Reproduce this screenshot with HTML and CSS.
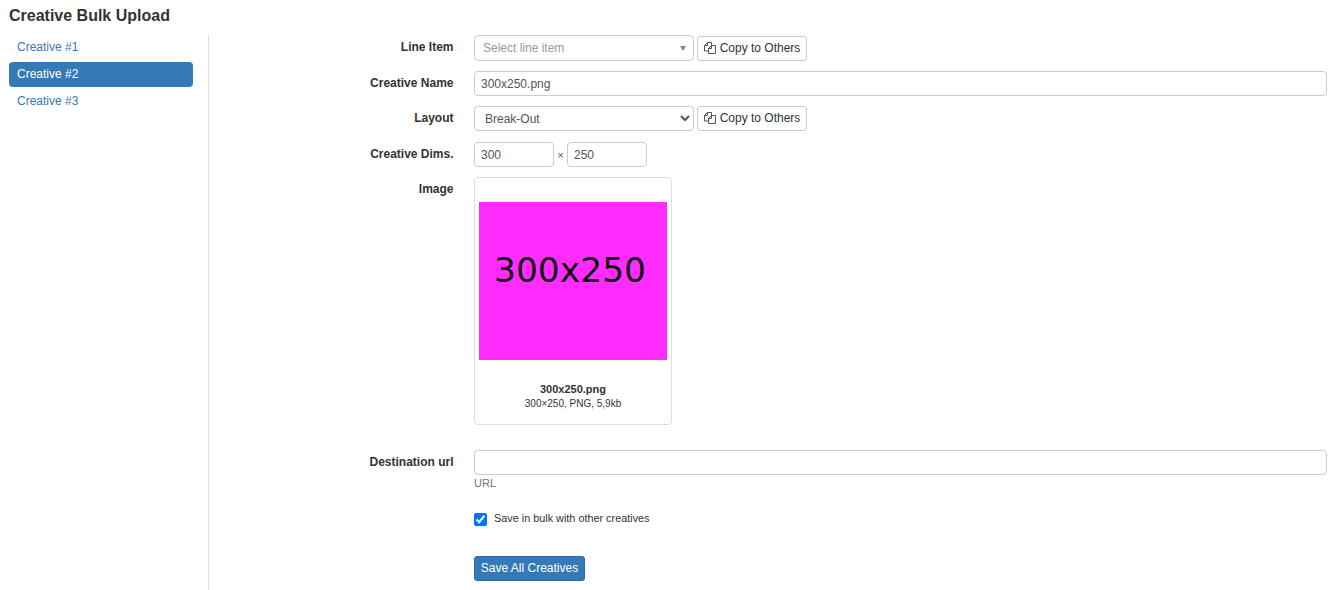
FILE: index.html
```html
<!DOCTYPE html>
<html lang="en">
<head>
    <meta charset="UTF-8">
    <meta name="viewport" content="width=device-width, initial-scale=1.0">
    <title>Creative Bulk Upload</title>
    <link rel="stylesheet" href="styles.css">
</head>
<body>

    <h2 class="page-title">Creative Bulk Upload</h2>

    <div class="page-body">
        <ul class="side-nav">
            <li><a href="#">Creative #1</a></li>
            <li><a href="#" class="active">Creative #2</a></li>
            <li><a href="#">Creative #3</a></li>
        </ul>

        <form class="creative-form">
            <div class="form-row row-line-item">
                <label class="form-label">Line Item</label>
                <div class="form-controls">
                    <div class="fake-select">
                        <span>Select line item</span>
                        <span class="fake-caret"></span>
                    </div>
                    <button type="button" class="copy-button">
                        <svg class="copy-icon" viewBox="0 0 12 12" width="12" height="12"><path d="M7.5 3V.5H3.5L.5 3.5V9H4.5M3.5.5V3.5H.5M4.5 6.5L7.5 3.5H11.5V11.5H4.5ZM7.5 3.5V6.5H4.5" fill="none" stroke="#444" stroke-width="0.9"/></svg>
                        Copy to Others
                    </button>
                </div>
            </div>

            <div class="form-row">
                <label class="form-label">Creative Name</label>
                <div class="form-controls">
                    <input type="text" class="text-input wide" value="300x250.png">
                </div>
            </div>

            <div class="form-row row-layout">
                <label class="form-label">Layout</label>
                <div class="form-controls">
                    <select class="layout-select">
                        <option>Break-Out</option>
                    </select>
                    <button type="button" class="copy-button">
                        <svg class="copy-icon" viewBox="0 0 12 12" width="12" height="12"><path d="M7.5 3V.5H3.5L.5 3.5V9H4.5M3.5.5V3.5H.5M4.5 6.5L7.5 3.5H11.5V11.5H4.5ZM7.5 3.5V6.5H4.5" fill="none" stroke="#444" stroke-width="0.9"/></svg>
                        Copy to Others
                    </button>
                </div>
            </div>

            <div class="form-row">
                <label class="form-label">Creative Dims.</label>
                <div class="form-controls">
                    <input type="text" class="text-input dim" value="300">
                    <span class="dim-sep">×</span>
                    <input type="text" class="text-input dim" value="250">
                </div>
            </div>

            <div class="form-row row-image">
                <label class="form-label">Image</label>
                <div class="image-card">
                    <div class="image-preview">300x250</div>
                    <div class="image-name">300x250.png</div>
                    <div class="image-meta">300×250, PNG, 5,9kb</div>
                </div>
            </div>

            <div class="form-row row-url">
                <label class="form-label">Destination url</label>
                <div class="form-stack">
                    <input type="text" class="text-input wide">
                    <div class="help-text">URL</div>
                </div>
            </div>

            <div class="form-row row-bulk">
                <div class="form-label"></div>
                <label class="bulk-check">
                    <input type="checkbox" checked>
                    <span>Save in bulk with other creatives</span>
                </label>
            </div>

            <div class="form-row">
                <div class="form-label"></div>
                <button type="button" class="save-button">Save All Creatives</button>
            </div>
        </form>
    </div>

</body>
</html>
```

FILE: styles.css
```css
html, body {
    height: 100%;
}
body {
    font-family: "Liberation Sans", Arial, sans-serif;
    font-size: 12px;
    color: #333;
    margin: 0;
    padding: 0 8px 0 9px;
    box-sizing: border-box;
    display: flex;
    flex-direction: column;
    overflow: hidden;
}
.page-title {
    font-size: 16px;
    line-height: 18px;
    font-weight: bold;
    margin: 0;
    padding: 7px 0 10px;
}
.page-body {
    display: flex;
    flex: 1;
}
.side-nav {
    list-style: none;
    margin: 0;
    padding: 0 15px 0 0;
    width: 184px;
    flex: none;
    border-right: 1px solid #ddd;
}
.side-nav li {
    margin-bottom: 2px;
}
.side-nav a {
    display: block;
    height: 25px;
    line-height: 25px;
    padding: 0 8px;
    color: #337ab7;
    text-decoration: none;
    border-radius: 4px;
}
.side-nav a.active {
    background-color: #337ab7;
    color: #fff;
}
.creative-form {
    flex: 1;
    min-width: 0;
}
.form-row {
    display: flex;
    margin-bottom: 10px;
}
.row-layout {
    margin-bottom: 11px;
}
.form-label {
    width: 244.5px;
    flex: none;
    margin-right: 20.5px;
    text-align: right;
    font-weight: bold;
    line-height: 24px;
}
.form-controls {
    display: flex;
    flex: 1;
    align-items: center;
    min-width: 0;
}
.form-stack {
    flex: 1;
    min-width: 0;
}
.text-input {
    height: 25px;
    padding: 0 6px;
    border: 1px solid #ccc;
    border-radius: 4px;
    box-sizing: border-box;
    font: 12px "Liberation Sans", Arial, sans-serif;
    color: #555;
    display: block;
}
.text-input.wide {
    width: 100%;
}
.text-input.dim {
    width: 80px;
}
.dim-sep {
    width: 13px;
    text-align: center;
    font-size: 11px;
    color: #555;
}
.fake-select {
    width: 220px;
    height: 26px;
    padding: 0 8px;
    border: 1px solid #ccc;
    border-radius: 4px;
    box-sizing: border-box;
    color: #999;
    display: flex;
    align-items: center;
    justify-content: space-between;
}
.fake-caret {
    border-top: 5px solid #888;
    border-left: 3.5px solid transparent;
    border-right: 3.5px solid transparent;
    margin-right: -1px;
}
.layout-select {
    width: 220px;
    height: 25px;
    padding: 0 6px;
    border: 1px solid #ccc;
    border-radius: 4px;
    background-color: #fff;
    font: 12px "Liberation Sans", Arial, sans-serif;
    color: #555;
}
.copy-button {
    height: 25px;
    width: 110px;
    margin-left: 3px;
    padding: 0 0 1px;
    background-color: #fff;
    border: 1px solid #ccc;
    border-radius: 3px;
    font: 12px "Liberation Sans", Arial, sans-serif;
    color: #333;
    display: flex;
    align-items: center;
    justify-content: center;
    gap: 4px;
}
.copy-icon {
    flex: none;
}
.row-line-item .copy-button {
    margin-top: 1px;
}
.image-card {
    width: 198px;
    height: 248px;
    padding: 24px 4px 0;
    border: 1px solid #ddd;
    border-radius: 4px;
    box-sizing: border-box;
    text-align: center;
}
.image-preview {
    height: 158px;
    width: 188px;
    padding-right: 6px;
    box-sizing: border-box;
    background-color: #ff2cff;
    color: #111;
    font-family: "DejaVu Sans", sans-serif;
    font-size: 34.5px;
    line-height: 136px;
    margin-bottom: 23px;
}
.image-name {
    font-size: 11px;
    font-weight: bold;
    line-height: 13px;
}
.image-meta {
    font-size: 10px;
    line-height: 15px;
}
.row-image {
    margin-bottom: 25px;
}
.help-text {
    font-size: 11px;
    line-height: 13px;
    color: #737373;
    margin-top: 2px;
}
.row-url {
    margin-bottom: 22px;
}
.bulk-check {
    display: flex;
    align-items: center;
    font-size: 10.85px;
}
.bulk-check input {
    width: 13px;
    height: 13px;
    margin: 1px 7px 0 0;
}
.bulk-check span {
    margin-top: -3px;
}
.row-bulk {
    margin-bottom: 30px;
}
.save-button {
    height: 25px;
    width: 111px;
    padding: 0 0 2px;
    background-color: #337ab7;
    color: #fff;
    border: 1px solid #2e6da4;
    border-radius: 3px;
    font: 12px "Liberation Sans", Arial, sans-serif;
}
```
